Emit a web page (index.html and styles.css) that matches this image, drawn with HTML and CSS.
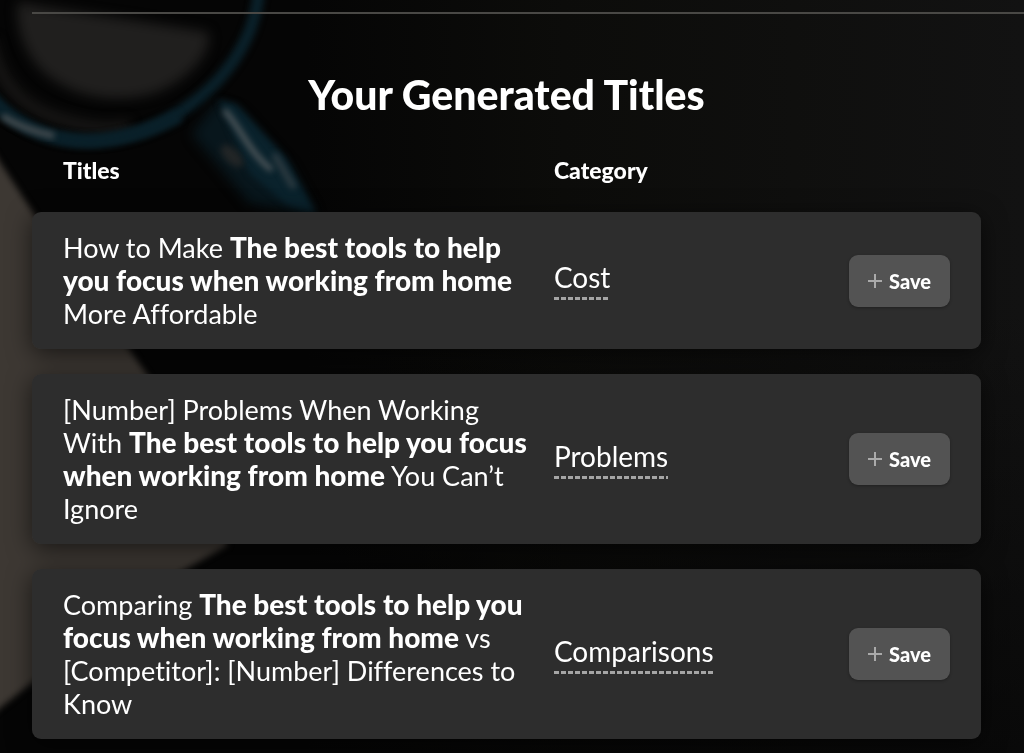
FILE: index.html
```html
<!DOCTYPE html>
<html lang="en">
<head>
    <meta charset="UTF-8">
    <meta name="viewport" content="width=device-width, initial-scale=1.0">
    <title>Your Generated Titles</title>
    <link rel="stylesheet" href="styles.css">
</head>
<body>
    <!-- dark desk scene behind the results -->
    <svg class="backdrop" viewBox="0 0 1024 753" preserveAspectRatio="xMinYMin slice" aria-hidden="true">
        <defs>
            <linearGradient id="base" x1="0" y1="0" x2="1" y2="0">
                <stop offset="0.3" stop-color="#050505"/>
                <stop offset="0.55" stop-color="#0c0c0a"/>
                <stop offset="1" stop-color="#121212"/>
            </linearGradient>
            <linearGradient id="fade" x1="0" y1="0" x2="0" y2="1">
                <stop offset="0.4" stop-color="#050505" stop-opacity="0"/>
                <stop offset="1" stop-color="#050505" stop-opacity="0.7"/>
            </linearGradient>
            <filter id="soft" x="-30%" y="-30%" width="160%" height="160%" color-interpolation-filters="sRGB"><feGaussianBlur stdDeviation="3"/></filter>
            <filter id="softer" x="-30%" y="-30%" width="160%" height="160%" color-interpolation-filters="sRGB"><feGaussianBlur stdDeviation="6"/></filter>
        </defs>
        <rect width="1024" height="753" fill="url(#base)"/>
        <rect width="1024" height="753" fill="url(#fade)"/>
        <path d="M-20 130 L0 162 L34 214 L165 400 L228 545 L150 590 L0 708 L-20 725 Z" fill="#3d3833" filter="url(#soft)"/>
        <path d="M-10 -10 C-5 70 30 130 100 135 C170 137 220 90 246 20 L250 -10 Z" fill="#050505" filter="url(#soft)"/>
        <path d="M-10 40 C0 90 30 112 70 122 C90 128 110 130 130 126" fill="none" stroke="#181716" stroke-width="12" filter="url(#softer)"/>
        <path d="M18 2 C70 12 140 20 208 32 C214 50 190 80 155 93 C115 105 75 97 48 76 C28 60 14 30 18 2 Z" fill="#201f1e" filter="url(#softer)"/>
        <path d="M-10 96 C20 132 60 144 96 141 C170 134 228 84 250 30 C256 12 258 4 259 -10" fill="none" stroke="#0a2029" stroke-width="12" filter="url(#soft)"/>
        <path d="M-10 100 C16 126 50 140 90 141 C120 141 150 132 180 116" fill="none" stroke="#0a2029" stroke-width="12" filter="url(#soft)"/>
        <path d="M2 116 C18 126 34 132 54 136" fill="none" stroke="#4a5053" stroke-width="6" filter="url(#soft)"/>
        <path d="M192 134 L216 102 L240 112 L290 168 L316 216 L250 204 Z" fill="#08161c" filter="url(#softer)"/>
        <path d="M218 100 L236 104 L286 158 L316 214 L286 204 L250 174 Z" fill="#0a222c" filter="url(#soft)"/>
        <path d="M224 110 C238 124 250 154 272 170" fill="none" stroke="#555b5e" stroke-width="5" filter="url(#soft)"/>
        <path d="M274 154 L294 188" fill="none" stroke="#303c42" stroke-width="6" filter="url(#soft)"/>
        <ellipse cx="232" cy="156" rx="14" ry="7" transform="rotate(45 232 156)" fill="#222526" filter="url(#soft)"/>
    </svg>

    <hr class="divider">
    <main class="results">
        <h1 class="heading">Your Generated Titles</h1>
        <table class="titles">
            <thead>
                <tr>
                    <th class="col-title" scope="col">Titles</th>
                    <th class="col-category" scope="col">Category</th>
                    <td class="col-save"></td>
                </tr>
            </thead>
            <tbody>
                <tr>
                    <td>How to Make <strong>The best tools to help you focus when working from home</strong> More Affordable</td>
                    <td><a class="category" href="#cost">Cost</a></td>
                    <td>
                        <button class="save" type="button">
                            <svg class="plus" viewBox="0 0 14 14" aria-hidden="true"><path d="M7 0V14M0 7H14"/></svg>
                            Save
                        </button>
                    </td>
                </tr>
                <tr>
                    <td>[Number] Problems When Working With <strong>The best tools to help you focus when working from home</strong> You Can’t Ignore</td>
                    <td><a class="category" href="#problems">Problems</a></td>
                    <td>
                        <button class="save" type="button">
                            <svg class="plus" viewBox="0 0 14 14" aria-hidden="true"><path d="M7 0V14M0 7H14"/></svg>
                            Save
                        </button>
                    </td>
                </tr>
                <tr>
                    <td>Comparing <strong>The best tools to help you focus when working from home</strong> vs [Competitor]: [Number] Differences to Know</td>
                    <td><a class="category" href="#comparisons">Comparisons</a></td>
                    <td>
                        <button class="save" type="button">
                            <svg class="plus" viewBox="0 0 14 14" aria-hidden="true"><path d="M7 0V14M0 7H14"/></svg>
                            Save
                        </button>
                    </td>
                </tr>
            </tbody>
        </table>
    </main>
</body>
</html>
```
FILE: styles.css
```css
* {
    box-sizing: border-box;
}
body {
    margin: 0;
    background-color: #050505;
    color: #fff;
    font-family: Lato, "Open Sans", sans-serif;
    font-size: 27px;
    font-variant-ligatures: none;
    line-height: 33px;
}
.backdrop {
    position: fixed;
    top: 0;
    left: 0;
    width: 100%;
    height: 100%;
    z-index: -1;
}
.divider {
    height: 2px;
    margin: 12px 0 0 32px;
    border: none;
    background-color: #494845;
}
.results {
    margin: 0 43px 0 32px;
}
.heading {
    margin: 0;
    padding-top: 57px;
    font-size: 41px;
    font-weight: 900;
    line-height: 48px;
    text-align: center;
}
.titles {
    width: 100%;
    table-layout: fixed;
    border-collapse: separate;
    border-spacing: 0 25px;
}
.titles thead th {
    padding: 10px 0 0 31px;
    font-size: 23px;
    font-weight: 900;
    text-align: left;
}
.titles thead .col-title {
    width: 55%;
}
.titles thead .col-category {
    padding-left: 0;
}
.col-save {
    width: 132px;
}
.titles tbody tr {
    border-radius: 9px;
    box-shadow: 0 5px 25px rgba(0, 0, 0, 0.6);
}
.titles tbody td {
    padding: 19px 0;
    background-color: #2d2d2d;
    vertical-align: middle;
}
.titles tbody td:first-child {
    padding-left: 31px;
    padding-right: 20px;
    border-radius: 9px 0 0 9px;
}
.titles tbody td:last-child {
    border-radius: 0 9px 9px 0;
}
strong {
    font-size: 28px;
    font-weight: 900;
    line-height: 1;
}
.category {
    display: inline-block;
    padding-bottom: 6px;
    color: #fff;
    font-size: 28px;
    text-decoration: none;
    background: repeating-linear-gradient(90deg, #a5a5a5 0 5px, transparent 5px 7px) bottom / 100% 3px no-repeat;
}
.save {
    display: flex;
    align-items: center;
    justify-content: center;
    gap: 7px;
    width: 101px;
    height: 52px;
    padding: 0;
    border: none;
    border-radius: 9px;
    background-color: #535353;
    box-shadow: 0 1px 3px rgba(0, 0, 0, 0.3);
    color: #fff;
    font-family: inherit;
    font-size: 20px;
    font-weight: 900;
    cursor: pointer;
}
.plus {
    width: 14px;
    height: 14px;
    fill: none;
    stroke: #aaa;
    stroke-width: 2;
}
```
